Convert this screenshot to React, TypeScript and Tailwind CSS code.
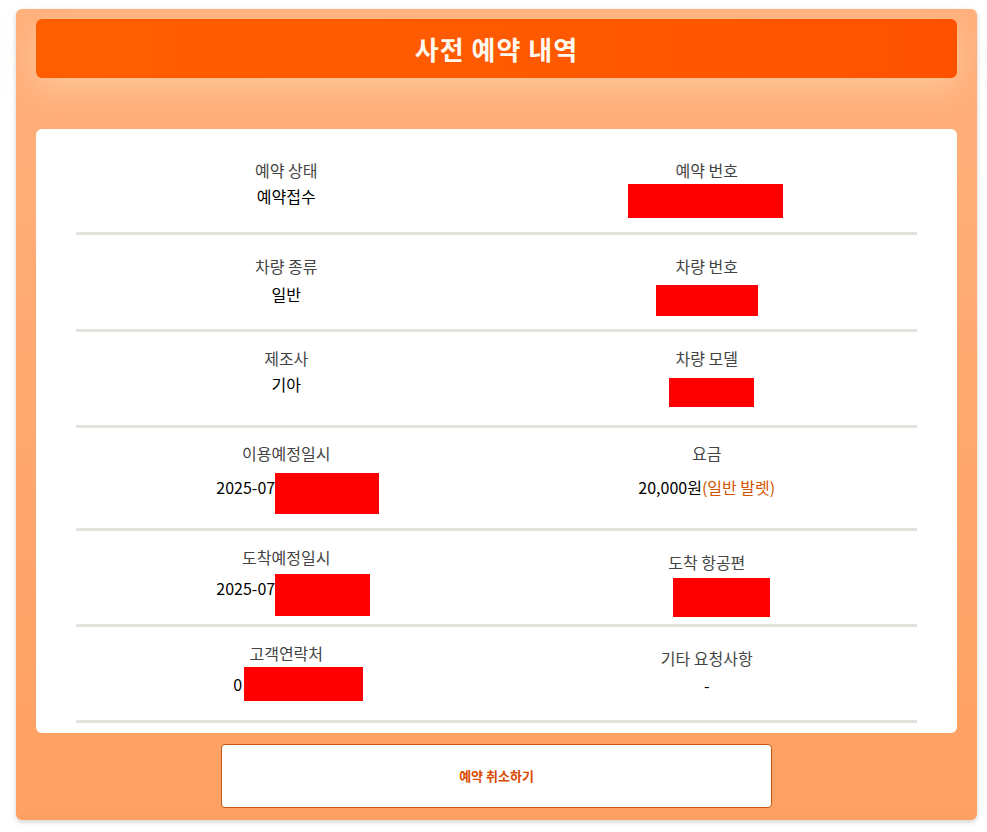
import React from "react";

type Box = { w: string; h: string; shift: string };

type Cell = {
  label: string;
  pad: string;
  gap: string;
  text?: string;
  extra?: string;
  box?: Box;
};

const rows: { height: string; cells: [Cell, Cell] }[] = [
  {
    height: "h-[91px]",
    cells: [
      { label: "예약 상태", pad: "pt-[15px]", gap: "mt-[4px]", text: "예약접수" },
      {
        label: "예약 번호",
        pad: "pt-[15px]",
        gap: "mt-[4px]",
        box: { w: "w-[155px]", h: "h-[34px]", shift: "translate-y-[5px] -translate-x-[1px]" },
      },
    ],
  },
  {
    height: "h-[97px]",
    cells: [
      { label: "차량 종류", pad: "pt-[20px]", gap: "mt-[6px]", text: "일반" },
      {
        label: "차량 번호",
        pad: "pt-[20px]",
        gap: "mt-[6px]",
        box: { w: "w-[102px]", h: "h-[31px]", shift: "translate-y-[6px]" },
      },
    ],
  },
  {
    height: "h-[96px]",
    cells: [
      { label: "제조사", pad: "pt-[15px]", gap: "mt-[4px]", text: "기아" },
      {
        label: "차량 모델",
        pad: "pt-[15px]",
        gap: "mt-[4px]",
        box: { w: "w-[85px]", h: "h-[29px]", shift: "translate-y-[8px] translate-x-[5px]" },
      },
    ],
  },
  {
    height: "h-[103px]",
    cells: [
      {
        label: "이용예정일시",
        pad: "pt-[14px]",
        gap: "mt-[12px]",
        text: "2025-07",
        box: { w: "w-[104px]", h: "h-[41px]", shift: "translate-y-[6px] -mr-[23px]" },
      },
      {
        label: "요금",
        pad: "pt-[14px]",
        gap: "mt-[12px]",
        text: "20,000원",
        extra: "(일반 발렛)",
      },
    ],
  },
  {
    height: "h-[96px]",
    cells: [
      {
        label: "도착예정일시",
        pad: "pt-[15px]",
        gap: "mt-[9px]",
        text: "2025-07",
        box: { w: "w-[95px]", h: "h-[42px]", shift: "translate-y-[7px] -mr-[14px]" },
      },
      {
        label: "도착 항공편",
        pad: "pt-[20px]",
        gap: "mt-[9px]",
        box: { w: "w-[97px]", h: "h-[39px]", shift: "translate-y-[4px] translate-x-[15px]" },
      },
    ],
  },
  {
    height: "h-[96px]",
    cells: [
      {
        label: "고객연락처",
        pad: "pt-[15px]",
        gap: "mt-[9px]",
        text: "0",
        box: { w: "w-[119px]", h: "h-[34px]", shift: "ml-[2px] -mr-[24px]" },
      },
      { label: "기타 요청사항", pad: "pt-[20px]", gap: "mt-[5px]", text: "-" },
    ],
  },
];

function InfoCell({ cell }: { cell: Cell }) {
  return (
    <div className={`flex flex-col items-center ${cell.pad}`}>
      <div className="h-[22px] leading-[22px] text-[16px] text-[#444]">{cell.label}</div>
      <div className={`flex h-[22px] items-center justify-center text-[16px] leading-[22px] text-black ${cell.gap}`}>
        {cell.text && <span>{cell.text}</span>}
        {cell.extra && <span className="text-[#d35400]">{cell.extra}</span>}
        {cell.box && (
          <span className={`block shrink-0 bg-[#ff0000] ${cell.box.w} ${cell.box.h} ${cell.box.shift}`} />
        )}
      </div>
    </div>
  );
}

export default function App() {
  return (
    <div
      className="min-h-screen bg-white pt-[9px] pl-[16px]"
      style={{ fontFamily: '"Noto Sans CJK KR", "Noto Sans", sans-serif' }}
    >
      <div className="flex h-[811px] w-[961px] flex-col rounded-md bg-gradient-to-b from-[#ffb07c] via-[#ffa86f] to-[#ffa063] px-5 pt-[10px] shadow-[0_2px_5px_rgba(0,0,0,0.18)]">
        {/* header */}
        <div className="flex h-[59px] items-center justify-center rounded-md bg-gradient-to-r from-[#ff5e00] via-[#ff5a00] to-[#ff5200] shadow-[0_10px_30px_rgba(255,220,180,0.55)]">
          <h1 className="text-[26px] font-bold tracking-[1px] text-[#fff8ee]">사전 예약 내역</h1>
        </div>

        {/* details card */}
        <div className="mt-[51px] rounded-md bg-white px-10 pt-[15px] pb-[10px]">
          {rows.map((row, i) => (
            <div
              key={i}
              className={`grid grid-cols-2 border-b-[3px] border-[#e3e3de] ${row.height}`}
            >
              <InfoCell cell={row.cells[0]} />
              <InfoCell cell={row.cells[1]} />
            </div>
          ))}
        </div>

        {/* action */}
        <div className="mt-[11px] flex justify-center">
          <button className="h-[64px] w-[551px] rounded-[4px] border border-[#c45a10] bg-white text-[13px] font-bold text-[#d94a00]">
            예약 취소하기
          </button>
        </div>
      </div>
    </div>
  );
}
